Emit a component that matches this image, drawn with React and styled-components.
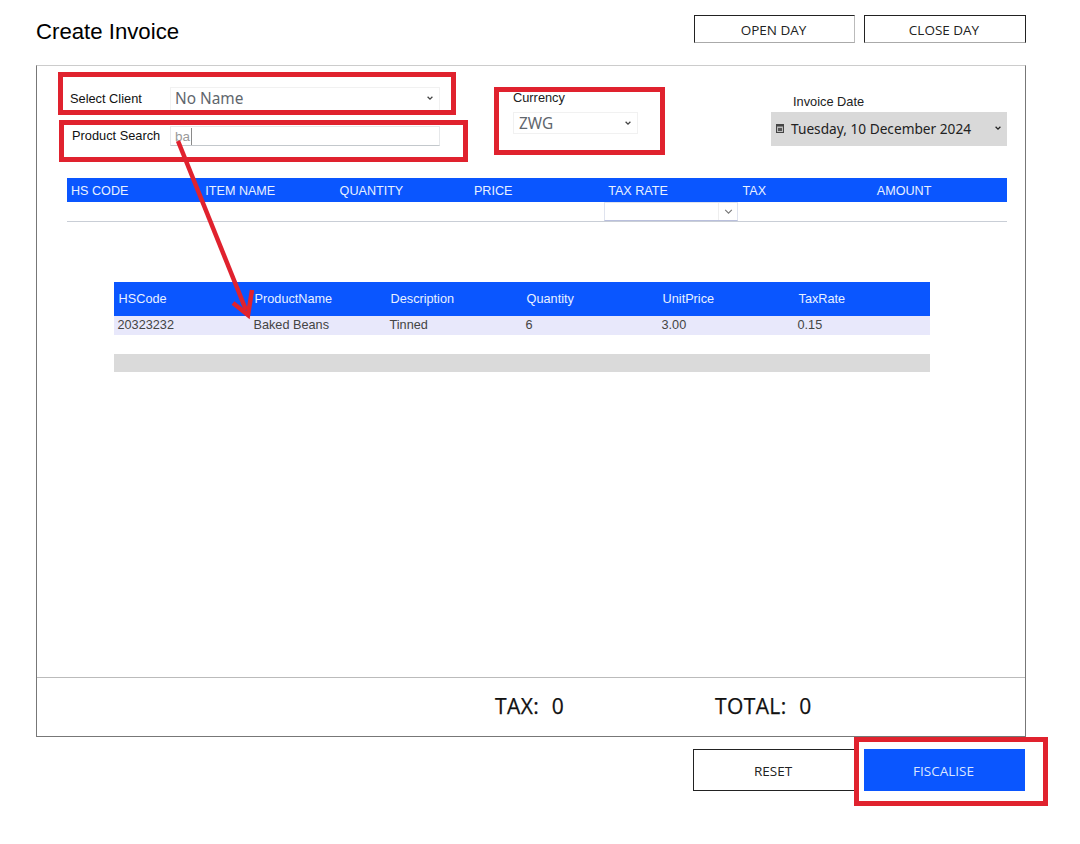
import React from "react";
import styled, { createGlobalStyle } from "styled-components";

const Global = createGlobalStyle`
  html, body { margin: 0; padding: 0; background: #fff; }
  * { box-sizing: border-box; }
`;
const Page = styled.div`
  position: relative; width: 1080px; height: 844px; padding: 15px 54px 0 36px;
  font-family: "Liberation Sans", Arial, sans-serif; color: #000; overflow: hidden;
`;
const TopBar = styled.header`
  display: flex; align-items: flex-start; justify-content: space-between; height: 50px;
`;
const Title = styled.h1`
  margin: 4px 0 0; font-size: 22.2px; font-weight: 400; line-height: 26px;
`;
const DayButtons = styled.div`display: flex; gap: 9px;`;
const DayButton = styled.button`
  width: ${p => p.$soft ? 161 : 162}px; height: 28px; padding: 1px 2px 0 0; background: #fff; font: 400 13.5px "Open Sans", sans-serif; color: #222;
  border: 1px solid #222; border-right-color: ${p => p.$soft ? "#bbb" : "#222"}; border-bottom-color: #aaa;
`;
const Panel = styled.section`
  display: flex; flex-direction: column; width: 990px; height: 672px;
  border: 1px solid #777; border-top-color: #ccc;
`;
const Body = styled.div`flex: 1; padding: 0 18px 0 30px;`;
const Form = styled.div`
  display: grid; grid-template-columns: 443px 258px 236px; height: 112px; margin-left: 3px;
`;
const LeftCol = styled.div`display: flex; flex-direction: column; gap: 15px; padding-top: 21px;`;
const FieldRow = styled.div`display: flex; align-items: center; height: ${p => p.$h}px;`;
const Label = styled.label`
  width: ${p => p.$w || 100}px; padding-left: ${p => p.$pad || 0}px; font-size: 12.8px; line-height: 14px;
  margin-top: ${p => p.$mt || 0}px; color: #111; flex: none;
`;
const Select = styled.div`
  display: flex; align-items: center; justify-content: space-between; width: ${p => p.$w}px; height: ${p => p.$h}px;
  padding: 0 5px ${p => p.$pb ?? 2}px ${p => p.$pl || 4}px; border: 1px solid #f1f1f1;
  font: 400 15.4px "Noto Sans", sans-serif; color: #5f666d;
`;
const SearchInput = styled.div`
  display: flex; align-items: center; width: 270px; height: 20px; padding-left: 4px;
  border: 1px solid #e6e8ea; border-bottom-color: #c3c8cc; font-size: 13.5px; color: #9a9a9a;
`;
const Caret = styled.span`display: inline-block; width: 1px; height: 17px; background: #8a8a8a; margin-left: 1px;`;
const CurrencyCol = styled.div`padding-top: 25px;`;
const SmallLabel = styled.div`font-size: 12.8px; line-height: 14px; color: #222; padding-left: ${p => p.$pad || 0}px; margin-bottom: ${p => p.$mb || 0}px;`;
const DateCol = styled.div`padding-top: 29px;`;
const DateField = styled.div`
  display: flex; align-items: center; height: 34px; padding: 0 5px 2px; background: #d9d9d9;
  font: 400 13.7px "Noto Sans", sans-serif; color: #222;
`;
const DateText = styled.span`flex: 1; margin-left: 7px; white-space: nowrap;`;
const BlueHead = styled.div`
  display: grid; grid-template-columns: repeat(${p => p.$n}, ${p => p.$col}px); background: #0a56ff; color: #e8f0ff;
  height: ${p => p.$h}px; align-items: center; font-size: ${p => p.$fs}px;
  padding: ${p => p.$pt || 0}px 0 ${p => p.$pb || 0}px ${p => p.$pl}px;
`;
const EntryRow = styled.div`
  display: flex; height: 20px; padding-left: 537px; border-bottom: 1px solid #c9ced6;
`;
const RateSelect = styled.div`
  display: flex; width: 134px; height: 19px; margin-top: 0; border: 1px solid #dfe3ee; border-bottom-color: #b9bfdc;
`;
const RateBox = styled.div`flex: 1; border-right: 1px solid #eee;`;
const RateBtn = styled.div`width: 18px; display: flex; align-items: center; justify-content: center;`;
const Results = styled.div`margin: 60px 77px 0 47px;`;
const ResultRow = styled.div`
  display: grid; grid-template-columns: repeat(6, 136px); height: 19px; align-items: center;
  background: #e8e8fb; color: #444; font-size: 12.7px; padding: 0 0 1px 3.5px;
`;
const ScrollBar = styled.div`height: 18px; margin-top: 19px; background: #dadada;`;
const Footer = styled.footer`
  display: flex; align-items: center; height: 59px; padding: 0 0 3px 458px; border-top: 1px solid #bbb;
  font: 500 21px "Open Sans", sans-serif; letter-spacing: 0.4px; word-spacing: 0.5px; color: #111;
  -webkit-text-stroke: 0.25px #111;
`;
const Stat = styled.div`width: ${p => p.$w}px; white-space: pre;`;
const Actions = styled.div`display: flex; gap: 9px; margin: 12px 0 0 657px;`;
const ActionButton = styled.button`
  width: ${p => p.$primary ? 161 : 162}px; height: 42px; padding: 1px 2px 0 0; font: 400 13.5px "Open Sans", sans-serif;
  background: ${p => p.$primary ? "#0a56ff" : "#fff"}; color: ${p => p.$primary ? "#dbe6ff" : "#222"};
  border: 1px solid ${p => p.$primary ? "#0a56ff" : "#222"};
`;
const RedBox = styled.div`
  position: absolute; left: ${p => p.$x}px; top: ${p => p.$y}px; width: ${p => p.$w}px; height: ${p => p.$h}px;
  border: 5px solid #e0222e; pointer-events: none;
`;
const ArrowSvg = styled.svg`position: absolute; left: 0; top: 0; pointer-events: none;`;

const Chevron = ({ size = 8, color = "#444", sw = 1.6 }) => (
  <svg width={size} height={size} viewBox="0 0 10 10" fill="none">
    <path d="M2 3.5 L5 6.5 L8 3.5" stroke={color} strokeWidth={sw} />
  </svg>
);
const CalendarIcon = () => (
  <svg width="8" height="9" viewBox="0 0 8 9">
    <rect x="0.5" y="0.5" width="7" height="8" fill="#bbb" stroke="#444" />
    <rect x="0.5" y="0.5" width="7" height="2" fill="#444" />
    <rect x="2" y="4" width="4" height="3" fill="#555" />
  </svg>
);

const head1 = ["HS CODE", "ITEM NAME", "QUANTITY", "PRICE", "TAX RATE", "TAX", "AMOUNT"];
const head2 = ["HSCode", "ProductName", "Description", "Quantity", "UnitPrice", "TaxRate"];
const row = ["20323232", "Baked Beans", "Tinned", "6", "3.00", "0.15"];

export default function App() {
  return (
    <Page>
      <Global />
      <TopBar>
        <Title>Create Invoice</Title>
        <DayButtons>
          <DayButton $soft>OPEN DAY</DayButton>
          <DayButton>CLOSE DAY</DayButton>
        </DayButtons>
      </TopBar>
      <Panel>
        <Body>
          <Form>
            <LeftCol>
              <FieldRow $h={24}>
                <Label $mt={-1}>Select Client</Label>
                <Select $w={270} $h={24}>No Name <Chevron /></Select>
              </FieldRow>
              <FieldRow $h={20}>
                <Label $pad={2}>Product Search</Label>
                <SearchInput>ba<Caret /></SearchInput>
              </FieldRow>
            </LeftCol>
            <CurrencyCol>
              <SmallLabel $mb={7}>Currency</SmallLabel>
              <Select $w={125} $h={22} $pb={0} $pl={5}>ZWG <Chevron /></Select>
            </CurrencyCol>
            <DateCol>
              <SmallLabel $pad={22} $mb={3}>Invoice Date</SmallLabel>
              <DateField>
                <CalendarIcon />
                <DateText>Tuesday, 10 December 2024</DateText>
                <Chevron color="#222" />
              </DateField>
            </DateCol>
          </Form>
          <BlueHead $n={7} $col={134.3} $h={24} $pt={1} $pl={4} $fs={12.6}>
            {head1.map(h => <span key={h}>{h}</span>)}
          </BlueHead>
          <EntryRow>
            <RateSelect>
              <RateBox />
              <RateBtn><Chevron size={11} color="#777" sw={1} /></RateBtn>
            </RateSelect>
          </EntryRow>
          <Results>
            <BlueHead $n={6} $col={136} $h={34} $pb={1} $pl={4.6} $fs={12.7}>
              {head2.map(h => <span key={h}>{h}</span>)}
            </BlueHead>
            <ResultRow>
              {row.map(c => <span key={c}>{c}</span>)}
            </ResultRow>
            <ScrollBar />
          </Results>
        </Body>
        <Footer>
          <Stat $w={220}>TAX:  0</Stat>
          <Stat $w={120}>TOTAL:  0</Stat>
        </Footer>
      </Panel>
      <Actions>
        <ActionButton>RESET</ActionButton>
        <ActionButton $primary>FISCALISE</ActionButton>
      </Actions>
      <RedBox $x={58} $y={72} $w={398} $h={43} />
      <RedBox $x={59} $y={120} $w={409} $h={42} />
      <RedBox $x={494} $y={87} $w={171} $h={68} />
      <RedBox $x={854} $y={737} $w={194} $h={69} />
      <ArrowSvg width="1080" height="844" viewBox="0 0 1080 844" fill="none">
        <path d="M178 141 L246 310" stroke="#e0222e" strokeWidth="4.5" />
        <path d="M233 303 L248 315 L252 290" stroke="#e0222e" strokeWidth="4.5" />
      </ArrowSvg>
    </Page>
  );
}
